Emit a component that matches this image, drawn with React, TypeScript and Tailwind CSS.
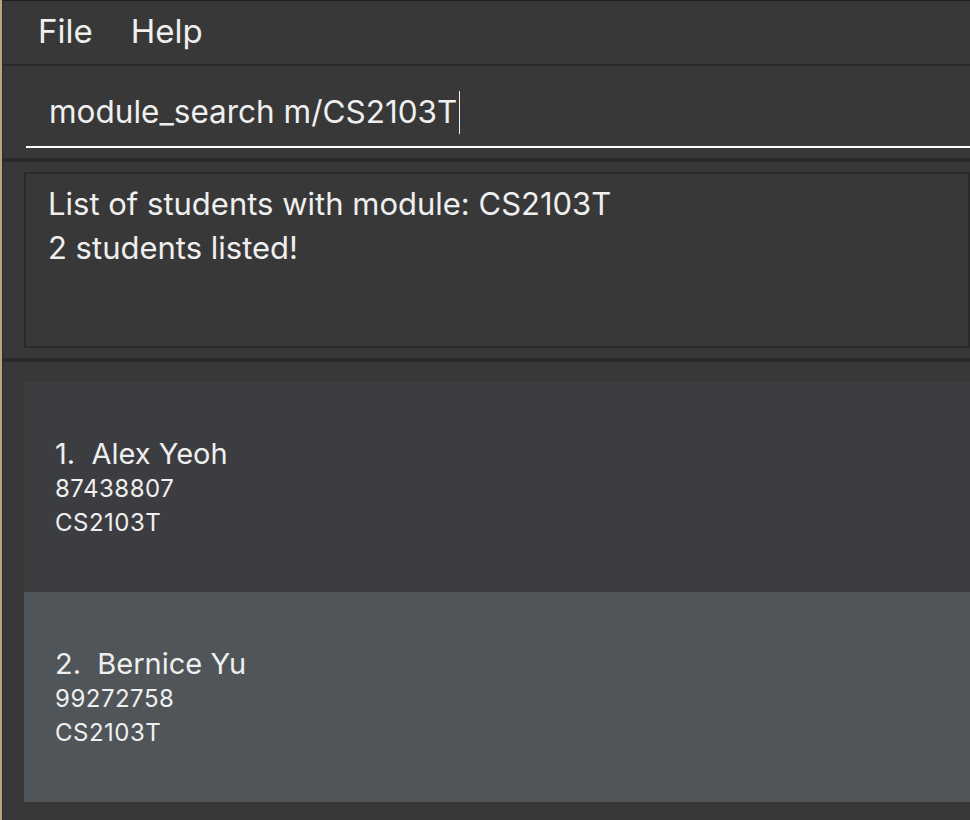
const students = [
  { id: 1, name: 'Alex Yeoh', phone: '87438807', module: 'CS2103T' },
  { id: 2, name: 'Bernice Yu', phone: '99272758', module: 'CS2103T' },
];

export default function App() {
  return (
    <div className="flex h-[820px] w-[970px] overflow-hidden bg-[#383838] font-['Inter',sans-serif] text-[#efefef]">
      <div className="w-[2px] shrink-0 bg-[#b5a684]" />
      <div className="w-px shrink-0 bg-[#2a2a2a]" />
      <div className="flex min-w-0 flex-1 flex-col">
        <div className="h-px bg-[#1e1e1e]" />
        <div className="flex h-[63px] items-start gap-[38px] pl-[35px] pt-[10px] text-[33px] leading-[40px]">
          <span>File</span>
          <span>Help</span>
        </div>
        <div className="h-[2px] bg-[#2a2a2a]" />

        <div className="flex h-[92px] flex-col justify-end pb-[10px] pl-[23px]">
          <div className="h-[62px] border-b-2 border-white pl-[23px] pt-[6px]">
            <div className="flex h-[40px] items-center text-[31.5px] leading-[40px]">
              <span>module_search m/CS2103T</span>
              <span className="ml-[2px] h-[43px] w-px bg-[#efefef]" />
            </div>
          </div>
        </div>
        <div className="h-[4px] bg-[#2a2a2a]" />

        <div className="h-[196px] pl-[21px] pt-[10px]">
          <div className="h-[176px] border-2 border-[#2a2a2a] pl-[22px] pt-[8px] text-[31px] leading-[44px]">
            <div>List of students with module: CS2103T</div>
            <div>2 students listed!</div>
          </div>
        </div>
        <div className="h-[4px] bg-[#2a2a2a]" />

        <div className="flex flex-col pl-[21px] pt-[20px]">
          {students.map((s, i) => (
            <div
              key={s.id}
              className={
                i % 2 === 0
                  ? 'flex h-[210px] flex-col pl-[31px] pt-[53px] bg-[#3c3d40]'
                  : 'flex h-[210px] flex-col pl-[31px] pt-[53px] bg-[#4f5558]'
              }
            >
              <div className="text-[29px] leading-[37px]">
                {s.id}.&nbsp;&nbsp;{s.name}
              </div>
              <div className="text-[24px] leading-[34px] tracking-[0.5px]">{s.phone}</div>
              <div className="text-[24px] leading-[34px] tracking-[0.5px]">{s.module}</div>
            </div>
          ))}
        </div>
      </div>
    </div>
  );
}
